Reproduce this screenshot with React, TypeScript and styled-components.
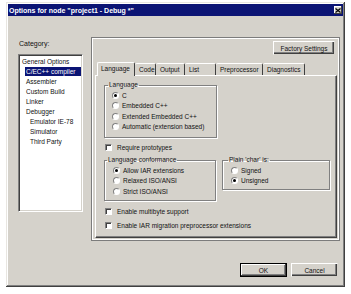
import React from 'react';
import styled, { createGlobalStyle } from 'styled-components';

const GlobalStyle = createGlobalStyle`
	body {
		margin: 0;
		background: #ffffff;
		font-family: 'Liberation Sans', Arial, sans-serif;
		font-size: 6.5px;
		color: #111;
	}
`;

const WindowFrame = styled.div`
	box-sizing: border-box;
	margin: 2px 0 0 6px;
	width: 339px;
	height: 285px;
	padding: 2px;
	background: #d5d2cb;
	box-shadow: inset -1px -1px 0 #404040, inset 1px 1px 0 #e8e6e1, inset -2px -2px 0 #808080, inset 2px 2px 0 #ffffff;
	display: flex;
	flex-direction: column;
`;

const TitleBar = styled.div`
	height: 12px;
	background: #0b1474;
	color: #fff;
	font-weight: bold;
	font-size: 7px;
	display: flex;
	align-items: center;
	justify-content: space-between;
	padding: 0 1px 0 1px;
`;

const CloseBox = styled.div`
	width: 8px;
	height: 8px;
	background: #d5d2cb;
	box-shadow: inset -1px -1px 0 #404040, inset 1px 1px 0 #fff;
	display: flex;
	align-items: center;
	justify-content: center;
`;

const Main = styled.div`
	display: flex;
	gap: 8px;
	padding: 21px 3px 0 10px;
`;

const LeftCol = styled.div`
	width: 65px;
	display: flex;
	flex-direction: column;
`;

const CategoryLabel = styled.div`
	margin-top: 3px;
	height: 8px;
	line-height: 8px;
	font-size: 7px;
	margin-left: 1px;
`;

const ListBox = styled.div`
	box-sizing: border-box;
	margin-top: 6px;
	height: 158px;
	background: #fff;
	border: 1px solid;
	border-color: #808080 #fff #fff #808080;
	box-shadow: inset 1px 1px 0 #404040, inset -1px -1px 0 #d5d2cb;
	padding: 1px 1px 0 1px;
`;

const ListItem = styled.div<{ level: number; selected?: boolean }>`
	height: 10px;
	line-height: 10px;
	display: flex;
	padding-left: ${(p) => 2 + p.level * 4}px;
	span {
		flex: 1;
		padding-left: ${(p) => (p.selected ? 1 : 0)}px;
		margin-left: ${(p) => (p.selected ? -1 : 0)}px;
		background: ${(p) => (p.selected ? '#0b1474' : 'transparent')};
		color: ${(p) => (p.selected ? '#fff' : '#111')};
		height: 9px;
		line-height: 9px;
		margin-top: 1px;
	}
`;

const Panel = styled.div`
	box-sizing: border-box;
	flex: 1;
	height: 204px;
	border: 1px solid #7c7c7c;
	box-shadow: inset 1px 1px 0 #fff, inset -1px -1px 0 #fff;
	padding: 3px 2px 2px 3px;
	display: flex;
	flex-direction: column;
`;

const Button = styled.div<{ w: number; isDefault?: boolean }>`
	box-sizing: border-box;
	width: ${(p) => p.w}px;
	height: 14px;
	display: flex;
	align-items: center;
	justify-content: center;
	font-size: 6.5px;
	background: #d5d2cb;
	border: 1px solid ${(p) => (p.isDefault ? '#000' : '#fff')};
	box-shadow: ${(p) =>
		p.isDefault
			? 'inset -1px -1px 0 #404040, inset 1px 1px 0 #fff, inset -2px -2px 0 #808080'
			: 'inset -1px -1px 0 #404040, inset -2px -2px 0 #808080'};
	${(p) => (p.isDefault ? '' : 'border-right-color: #d5d2cb; border-bottom-color: #d5d2cb;')}
`;

const TopRow = styled.div`
	display: flex;
	justify-content: flex-end;
	padding-right: 2px;
`;

const TabStrip = styled.div`
	display: flex;
	align-items: flex-end;
	margin-top: 8px;
	padding-left: 2px;
	height: 12px;
`;

const Tab = styled.div<{ w: number; active?: boolean }>`
	box-sizing: border-box;
	width: ${(p) => p.w}px;
	height: ${(p) => (p.active ? 14 : 12)}px;
	padding-left: ${(p) => (p.active ? 3 : 4)}px;
	line-height: ${(p) => (p.active ? 12 : 11)}px;
	border-top: 1px solid #fff;
	border-left: ${(p) => (p.active ? '1px solid #fff' : 'none')};
	border-right: 1px solid #404040;
	border-radius: 2px 2px 0 0;
	background: #d5d2cb;
	white-space: nowrap;
	position: relative;
	z-index: 1;
	margin-bottom: ${(p) => (p.active ? -1 : 0)}px;
`;

const TabPage = styled.div`
	box-sizing: border-box;
	flex: 1;
	border: 1px solid;
	border-color: #fff #404040 #404040 #fff;
	box-shadow: inset -1px -1px 0 #808080;
	padding: 5px 0 0 8px;
	display: flex;
	flex-direction: column;
`;

const Group = styled.fieldset<{ w: number; pl: number; pb: number; lx: number }>`
	box-sizing: border-box;
	width: ${(p) => p.w}px;
	margin: 0;
	min-width: 0;
	padding: 1px 0 ${(p) => p.pb}px ${(p) => p.pl}px;
	border: 1px solid #808080;
	box-shadow: inset 1px 1px 0 #fff, 1px 1px 0 #fff;
	legend {
		padding: 0 1px;
		margin-left: ${(p) => p.lx - p.pl}px;
		height: 8px;
		line-height: 8px;
		font-size: 6.5px;
	}
`;

const OptionRow = styled.div<{ h?: number }>`
	display: flex;
	align-items: center;
	gap: 3px;
	height: ${(p) => p.h ?? 10.5}px;
	white-space: nowrap;
`;

const RadioDot = styled.span<{ checked?: boolean }>`
	box-sizing: border-box;
	width: 7px;
	height: 7px;
	border-radius: 50%;
	border: 1px solid;
	border-color: #808080 #fff #fff #808080;
	background: #fff;
	display: flex;
	align-items: center;
	justify-content: center;
	&::after {
		content: '';
		width: 3px;
		height: 3px;
		border-radius: 50%;
		background: ${(p) => (p.checked ? '#000' : 'transparent')};
	}
`;

const CheckBoxBox = styled.span`
	box-sizing: border-box;
	width: 7px;
	height: 7px;
	border: 1px solid;
	border-color: #808080 #fff #fff #808080;
	box-shadow: inset 1px 1px 0 #404040;
	background: #fff;
	margin-left: 1px;
	margin-right: 2px;
`;

const GroupRow = styled.div`
	display: flex;
	align-items: flex-start;
	gap: 6px;
	margin-top: 4px;
`;

const ButtonRow = styled.div`
	display: flex;
	justify-content: flex-end;
	gap: 4px;
	padding: 22px 5px 0 0;
`;

const Radio = ({ label, checked }: { label: string; checked?: boolean }) => (
	<OptionRow>
		<RadioDot checked={checked} />
		<span>{label}</span>
	</OptionRow>
);

const Check = ({ label, mt }: { label: string; mt: number }) => (
	<OptionRow h={10} style={{ marginTop: mt }}>
		<CheckBoxBox />
		<span>{label}</span>
	</OptionRow>
);

const categories: { label: string; level: number; selected?: boolean }[] = [
	{ label: 'General Options', level: 0 },
	{ label: 'C/EC++ compiler', level: 1, selected: true },
	{ label: 'Assembler', level: 1 },
	{ label: 'Custom Build', level: 1 },
	{ label: 'Linker', level: 1 },
	{ label: 'Debugger', level: 1 },
	{ label: 'Emulator IE-78', level: 2 },
	{ label: 'Simulator', level: 2 },
	{ label: 'Third Party', level: 2 },
];

const tabs = [
	{ label: 'Language', w: 38, active: true },
	{ label: 'Code', w: 21 },
	{ label: 'Output', w: 29 },
	{ label: 'List', w: 31 },
	{ label: 'Preprocessor', w: 47 },
	{ label: 'Diagnostics', w: 42 },
];

function App() {
	return (
		<>
			<GlobalStyle />
			<WindowFrame>
				<TitleBar>
					<span>Options for node "project1 - Debug *"</span>
					<CloseBox>
						<svg width="6" height="5" viewBox="0 0 6 5">
							<path d="M0.5 0.5 L5.5 4.5 M5.5 0.5 L0.5 4.5" stroke="#000" strokeWidth="1.2" />
						</svg>
					</CloseBox>
				</TitleBar>
				<Main>
					<LeftCol>
						<CategoryLabel>Category:</CategoryLabel>
						<ListBox>
							{categories.map((c) => (
								<ListItem key={c.label} level={c.level} selected={c.selected}>
									<span>{c.label}</span>
								</ListItem>
							))}
						</ListBox>
					</LeftCol>
					<Panel>
						<TopRow>
							<Button w={62}>Factory Settings</Button>
						</TopRow>
						<TabStrip>
							{tabs.map((t) => (
								<Tab key={t.label} w={t.w} active={t.active}>
									{t.label}
								</Tab>
							))}
						</TabStrip>
						<TabPage>
							<Group w={113} pl={7} pb={5} lx={3}>
								<legend>Language</legend>
								<Radio label="C" checked />
								<Radio label="Embedded C++" />
								<Radio label="Extended Embedded C++" />
								<Radio label="Automatic (extension based)" />
							</Group>
							<Check label="Require prototypes" mt={4} />
							<GroupRow>
								<Group w={112} pl={8} pb={3} lx={2}>
									<legend>Language conformance</legend>
									<Radio label="Allow IAR extensions" checked />
									<Radio label="Relaxed ISO/ANSI" />
									<Radio label="Strict ISO/ANSI" />
								</Group>
								<Group w={108} pl={8} pb={3} lx={5}>
									<legend>Plain 'char' is:</legend>
									<Radio label="Signed" />
									<Radio label="Unsigned" checked />
								</Group>
							</GroupRow>
							<Check label="Enable multibyte support" mt={6} />
							<Check label="Enable IAR migration preprocessor extensions" mt={4} />
						</TabPage>
					</Panel>
				</Main>
				<ButtonRow>
					<Button w={47} isDefault>
						OK
					</Button>
					<Button w={47}>Cancel</Button>
				</ButtonRow>
			</WindowFrame>
		</>
	);
}

export default App;
